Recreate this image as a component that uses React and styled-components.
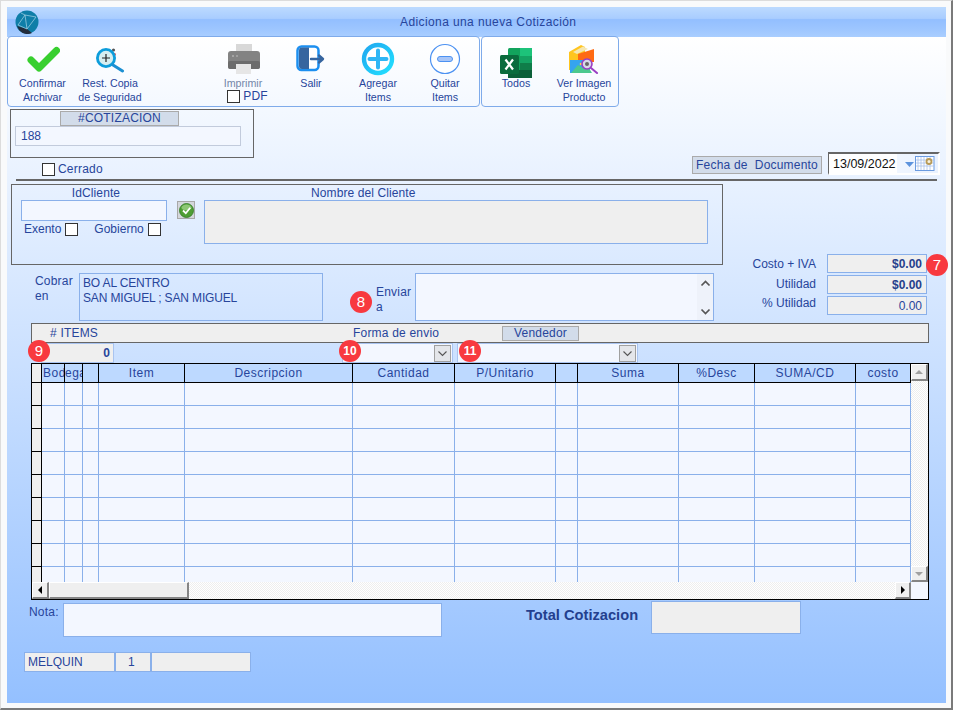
import React from "react";
import styled, { createGlobalStyle } from "styled-components";

const Global = createGlobalStyle`
  html, body { margin: 0; padding: 0; background: #fff; }
  #root { width: 953px; height: 710px; overflow: hidden; }
  * { box-sizing: border-box; }
`;

const INK = "#27459b";
const LINE = "#8ab0ea";
const FIELD = "#f3f7ff";
const GREY = "#efefef";

const Frame = styled.div`
  width: 953px;
  height: 710px;
  padding: 6px 5px 5px 6px;
  background: #f9fafb;
  border-top: 1px solid #dcdcdc;
  border-left: 1px solid #dcdcdc;
  border-right: 2px solid #7a7a7a;
  border-bottom: 2px solid #7a7a7a;
  font-family: "Liberation Sans", Arial, sans-serif;
  font-size: 12px;
  color: ${INK};
`;
const Win = styled.div`
  width: 939px;
  height: 696px;
  background: linear-gradient(180deg, #ffffff 0, #ffffff 30px, #94c0ff 100%);
`;
const TitleBar = styled.div`
  height: 30px;
  display: flex;
  align-items: center;
  padding-left: 8px;
  background: linear-gradient(180deg, #bcdaff 0%, #a9cdff 38%, #93bfff 42%, #9cc5ff 70%, #a9ceff 100%);
`;
const TitleText = styled.div`
  margin-left: 361px;
  font-size: 12px;
  letter-spacing: 0.4px;
  color: ${INK};
`;
const Toolbar = styled.div`
  display: flex;
  margin-top: -1px;
  height: 71px;
  gap: 1px;
`;
const ToolGroup = styled.div`
  display: grid;
  width: ${(p) => p.$w}px;
  grid-template-columns: ${(p) => p.$cols};
  border: 1px solid #7fabea;
  border-radius: 4px;
`;
const Tool = styled.div`
  display: flex;
  flex-direction: column;
  align-items: center;
  text-align: center;
  font-size: 10.67px;
  line-height: 14px;
  color: ${(p) => (p.$muted ? "#7486a8" : INK)};
`;
const ToolIcon = styled.div`
  height: 39px;
  padding-top: ${(p) => p.$pt}px;
  display: flex;
  align-items: flex-start;
  justify-content: center;
  flex: none;
`;
const Spacer = styled.div``;
const PdfRow = styled.div`
  display: flex;
  align-items: center;
  gap: 3px;
  font-size: 12px;
  letter-spacing: 0.2px;
  color: ${INK};
  line-height: 13px;
  margin-left: 9px;
`;
const Check = styled.span`
  display: inline-block;
  flex: none;
  width: 13px;
  height: 13px;
  background: #fff;
  border: 1px solid #333;
`;
const TopRow = styled.div`
  display: flex;
  justify-content: space-between;
  align-items: flex-end;
  padding: 2px 6px 0 3px;
`;
const QuoteCol = styled.div`
  display: flex;
  flex-direction: column;
`;
const QuoteBox = styled.div`
  width: 244px;
  height: 49px;
  border: 1px solid #666;
  padding: 1px 12px 0 4px;
  display: flex;
  flex-direction: column;
  align-items: flex-start;
`;
const HeadLabel = styled.div`
  background: #d2dcea;
  border: 1px solid #aaa;
  color: ${INK};
  text-align: center;
  font-size: 12px;
  line-height: ${(p) => (p.$h || 15) - 2}px;
  letter-spacing: 0.2px;
  width: ${(p) => p.$w}px;
  height: ${(p) => p.$h || 15}px;
  margin-left: ${(p) => p.$ml || 0}px;
  margin-bottom: ${(p) => p.$mb || 0}px;
  flex: none;
`;
const QuoteInput = styled.div`
  width: 226px;
  height: 20px;
  background: ${FIELD};
  border: 1px solid #c2cbdc;
  padding-left: 5px;
  line-height: 18px;
  font-size: 12px;
`;
const CheckLine = styled.label`
  display: flex;
  align-items: center;
  gap: 3px;
  height: 13px;
  margin: 5px 0 0 32px;
  font-size: 12px;
  line-height: 11px;
  letter-spacing: 0.2px;
`;
const DateGroup = styled.div`
  display: flex;
  align-items: flex-end;
  gap: 6px;
  margin-bottom: 1px;
`;
const DateBox = styled.div`
  width: 112px;
  height: 23px;
  display: flex;
  align-items: center;
  background: linear-gradient(90deg, #fff 0, #fff 62%, #f0f6ff 62%, #eaf2ff 100%);
  border-top: 2px solid #666;
  border-left: 1px solid #666;
  border-right: 2px solid #fff;
  border-bottom: 2px solid #fff;
  color: #111;
  font-size: 12.5px;
  padding-left: 4px;
  gap: 9px;
`;
const Rule = styled.div`
  height: 2px;
  background: #666;
  margin: 3px 9px 0 9px;
`;
const MainRow = styled.div`
  display: grid;
  grid-template-columns: 733px 206px;
  margin-top: 3px;
`;
const ClientBox = styled.div`
  margin-left: 4px;
  width: 712px;
  height: 81px;
  border: 1px solid #666;
  padding: 0 0 0 9px;
  display: grid;
  grid-template-columns: 146px 17px 504px;
  column-gap: 10px;
  grid-template-rows: 15px auto;
`;
const ClientHead = styled.div`
  text-align: ${(p) => p.$align || "center"};
  padding-left: ${(p) => p.$pl || 0}px;
  line-height: 17px;
  font-size: 12px;
  letter-spacing: 0.1px;
`;
const ClientCol = styled.div`
  display: flex;
  flex-direction: column;
`;
const FieldBox = styled.div`
  width: ${(p) => (p.$w ? `${p.$w}px` : "auto")};
  height: ${(p) => p.$h}px;
  background: ${(p) => p.$bg || FIELD};
  border: 1px solid ${LINE};
  flex: none;
`;
const VerifyBtn = styled.div`
  width: 18px;
  height: 18px;
  margin-top: 1px;
  background: #d4d7dc;
  border: 1px solid #a8a8a8;
  display: flex;
  align-items: center;
  justify-content: center;
`;
const TaxRow = styled.div`
  display: flex;
  align-items: center;
  margin-top: 1px;
  padding-left: 3px;
`;
const TaxItem = styled.span`
  display: flex;
  align-items: center;
  gap: 4px;
  margin-right: 16px;
`;
const AddressRow = styled.div`
  display: flex;
  margin-top: 8px;
  height: 48px;
`;
const SideLabel = styled.div`
  position: relative;
  line-height: 15px;
  letter-spacing: 0.2px;
  flex: none;
  width: ${(p) => p.$w}px;
  margin-left: ${(p) => p.$ml}px;
  padding-top: ${(p) => p.$pt}px;
`;
const AddressBox = styled.div`
  width: ${(p) => p.$w}px;
  height: 48px;
  border: 1px solid ${LINE};
  background: ${(p) => p.$bg || "transparent"};
  padding: 2px 0 0 3px;
  line-height: 15px;
  font-size: 12px;
  display: flex;
  justify-content: flex-end;
  white-space: pre-line;
`;
const AddressText = styled.div`
  flex: 1;
  letter-spacing: -0.15px;
`;
const TextScroll = styled.div`
  width: 16px;
  background: #eef2fa;
  margin-top: -2px;
  display: flex;
  flex-direction: column;
  justify-content: space-between;
  align-items: center;
  padding: 6px 0 5px;
`;
const StatsCol = styled.div`
  padding-top: 70px;
  display: grid;
  grid-template-columns: 76px 100px;
  column-gap: 11px;
  grid-auto-rows: 19px;
  row-gap: 2px;
  align-content: start;
`;
const StatLabel = styled.div`
  text-align: right;
  line-height: ${(p) => p.$lh}px;
  white-space: nowrap;
`;
const StatValue = styled.div`
  position: relative;
  background: ${GREY};
  border: 1px solid ${LINE};
  text-align: right;
  padding-right: 4px;
  line-height: 18px;
  font-weight: ${(p) => (p.$bold ? 700 : 400)};
  color: ${(p) => (p.$bold ? "#263f8c" : INK)};
`;
const Badge = styled.span`
  position: absolute;
  left: ${(p) => p.$x}px;
  top: ${(p) => p.$y}px;
  width: 22px;
  height: 22px;
  border-radius: 50%;
  background: #f8393f;
  color: #fff;
  font-size: ${(p) => p.$fs || 15}px;
  font-weight: ${(p) => (p.$fs ? 700 : 400)};
  line-height: 22px;
  text-align: center;
  z-index: 3;
`;
const InfoBar = styled.div`
  margin: 2px 0 0 24px;
  width: 898px;
  height: 20px;
  background: ${GREY};
  border: 1px solid #666;
  display: flex;
  align-items: center;
  letter-spacing: 0.2px;
`;
const BarText = styled.span`
  flex: none;
  width: ${(p) => p.$w}px;
  margin-left: ${(p) => p.$ml}px;
`;
const SelectRow = styled.div`
  display: flex;
  margin-left: 34px;
  height: 20px;
`;
const CountBox = styled.div`
  position: relative;
  width: 73px;
  height: 20px;
  background: ${GREY};
  border: 1px solid #a9c4f0;
  text-align: right;
  padding-right: 3px;
  font-weight: 700;
  line-height: 19px;
`;
const SelectBox = styled.div`
  position: relative;
  width: ${(p) => p.$w}px;
  margin-left: ${(p) => p.$ml}px;
  height: 20px;
  background: ${FIELD};
  border: 1px solid #a9c4f0;
  display: flex;
  justify-content: flex-end;
  padding: 1px;
`;
const SelectBtn = styled.div`
  width: 17px;
  height: 17px;
  background: #e4e6ea;
  border: 1px solid #a0a0a0;
  display: flex;
  align-items: center;
  justify-content: center;
`;
const TableWrap = styled.div`
  margin-left: 24px;
  width: 898px;
  height: 237px;
  border: 1px solid #000;
  background: ${FIELD};
`;
const TableTop = styled.div`
  display: flex;
  height: 218px;
`;
const GridArea = styled.div`
  width: 879px;
  height: 218px;
  overflow: hidden;
  display: grid;
  grid-template-columns: 10px 23px 18px 16px 86px 168px 102px 101px 22px 101px 76px 101px 55px;
  grid-template-rows: 19px;
  grid-auto-rows: 23px;
`;
const HeadCell = styled.div`
  background: #bdd9ff;
  border-right: 1px solid #000;
  border-bottom: 1px solid #000;
  text-align: ${(p) => p.$align || "center"};
  padding-left: ${(p) => p.$pl || 0}px;
  line-height: 18px;
  font-size: 12px;
  letter-spacing: 0.5px;
  white-space: nowrap;
  overflow: hidden;
`;
const CornerCell = styled.div`
  background: ${GREY};
  border-right: 1px solid #000;
  border-bottom: 1px solid #000;
`;
const RowHead = styled(CornerCell)``;
const BodyCell = styled.div`
  background: ${FIELD};
  border-right: 1px solid ${LINE};
  border-bottom: 1px solid ${LINE};
`;
const Dither = styled.div`
  background-color: #f8f8f8;
  background-image: repeating-conic-gradient(#eeeeee 0 25%, #ffffff 0 50%);
  background-size: 2px 2px;
`;
const VScroll = styled(Dither)`
  width: 17px;
  display: flex;
  flex-direction: column;
  justify-content: space-between;
`;
const HScroll = styled.div`
  display: flex;
  height: 17px;
`;
const HTrack = styled(Dither)`
  flex: 1;
`;
const ScrollBtn = styled.div`
  width: ${(p) => p.$w || 17}px;
  height: ${(p) => p.$h || 17}px;
  flex: none;
  background: ${GREY};
  border-top: 1px solid #fff;
  border-left: 1px solid #fff;
  border-right: 2px solid #858585;
  border-bottom: 2px solid #858585;
  display: flex;
  align-items: center;
  justify-content: center;
`;
const Corner = styled.div`
  width: 17px;
  flex: none;
`;
const Arrow = styled.span`
  width: 0;
  height: 0;
  border-style: solid;
  ${(p) =>
    p.$dir === "left"
      ? "border-width: 4px 4px 4px 0; border-color: transparent #000 transparent transparent;"
      : p.$dir === "right"
      ? "border-width: 4px 0 4px 4px; border-color: transparent transparent transparent #000;"
      : p.$dir === "up"
      ? "border-width: 0 4px 4px 4px; border-color: transparent transparent #a0a0a0 transparent;"
      : "border-width: 4px 4px 0 4px; border-color: #a0a0a0 transparent transparent transparent;"}
`;
const FootRow = styled.div`
  display: flex;
  align-items: flex-start;
  height: 49px;
`;
const NoteLabel = styled.div`
  margin: 5px 0 0 22px;
  width: 34px;
  letter-spacing: 0.2px;
`;
const NoteBox = styled(FieldBox)`
  margin-top: 3px;
`;
const TotalLabel = styled.div`
  margin: 7px 0 0 84px;
  width: 125px;
  font-size: 14.67px;
  font-weight: 700;
  white-space: nowrap;
  color: #233f8e;
  line-height: 17px;
`;
const TotalBox = styled(FieldBox)`
  margin-top: 1px;
`;
const StatusRow = styled.div`
  display: flex;
  margin: 3px 0 0 17px;
`;
const StatusCell = styled.div`
  width: ${(p) => p.$w}px;
  height: 20px;
  background: ${GREY};
  border: 1px solid ${LINE};
  padding-left: ${(p) => p.$pl || 0}px;
  line-height: 18px;
`;

const Globe = () => (
  <svg width="24" height="24" viewBox="0 0 24 24">
    <circle cx="12" cy="12" r="11.5" fill="#0f7ea8" />
    <path d="M2 16 L12 19 L17 23 A11.5 11.5 0 0 1 4 20 Z" fill="#222c3c" />
    <path d="M3 15 L10 5 L21 7 M10 5 L12 19 L21 7 M3 15 L12 19 M6 3 L10 5" fill="none" stroke="#a8d4e6" strokeWidth="0.7" />
  </svg>
);
const CheckIcon = () => (
  <svg width="34" height="28" viewBox="-1 0 34 28">
    <polyline points="4,15 12,23 29.5,5.5" fill="none" stroke="#38cf2f" strokeWidth="7" strokeLinecap="round" strokeLinejoin="round" />
  </svg>
);
const RestoreIcon = () => (
  <svg width="32" height="28" viewBox="0 0 32 28">
    <circle cx="19.5" cy="5" r="1.6" fill="#555" />
    <circle cx="20.5" cy="9.5" r="1.4" fill="#ef5350" />
    <circle cx="12" cy="13" r="8.6" fill="#d6eef0" stroke="#0d9ddb" strokeWidth="2.8" />
    <path d="M12 9 V17 M8 13 H16" stroke="#222" strokeWidth="1.2" />
    <path d="M19 20 L28.5 26" stroke="#1b8fd2" strokeWidth="3" strokeLinecap="round" />
  </svg>
);
const PrinterIcon = () => (
  <svg width="34" height="32" viewBox="-1 0 34 32">
    <rect x="9" y="1" width="16" height="10" fill="#d8d8d8" />
    <rect x="1" y="8" width="32" height="18" rx="3" fill="#838383" />
    <rect x="1" y="18" width="32" height="8" rx="2" fill="#6c6c6c" />
    <circle cx="6" cy="13" r="1" fill="#b0b0b0" />
    <circle cx="10" cy="13" r="1" fill="#a8a8a8" />
    <rect x="9" y="21" width="15" height="10" fill="#e6e6e6" />
  </svg>
);
const ExitIcon = () => (
  <svg width="30" height="28" viewBox="0 0 30 28">
    <rect x="1.5" y="1.5" width="21" height="23.5" rx="4" fill="#fff" stroke="#1c8ff0" strokeWidth="2.5" />
    <path d="M3 5.5 a3 3 0 0 1 3 -3 H13 V24 H6 a3 3 0 0 1 -3 -3 Z" fill="#36659f" />
    <path d="M15 14 H26 M23 10.5 L27 14 L23 17.5" fill="none" stroke="#36659f" strokeWidth="2.4" strokeLinecap="round" strokeLinejoin="round" />
  </svg>
);
const PlusIcon = () => (
  <svg width="34" height="34" viewBox="0 0 34 34">
    <defs>
      <linearGradient id="plusg" x1="0" y1="0" x2="1" y2="1">
        <stop offset="0" stopColor="#20a8f0" />
        <stop offset="1" stopColor="#22e0ff" />
      </linearGradient>
    </defs>
    <circle cx="17" cy="17" r="14" fill="#fff" stroke="url(#plusg)" strokeWidth="4.4" />
    <path d="M17 8.5 V25.5 M8.5 17 H25.5" stroke="#2fb6f5" strokeWidth="4" strokeLinecap="round" />
  </svg>
);
const MinusIcon = () => (
  <svg width="32" height="32" viewBox="0 0 32 32">
    <circle cx="16" cy="16" r="14.5" fill="#fff" stroke="#4d92f2" strokeWidth="1.2" />
    <rect x="8.5" y="13.5" width="15" height="5" rx="2.5" fill="#a8c6f8" stroke="#4d92f2" strokeWidth="1" />
  </svg>
);
const ExcelIcon = () => (
  <svg width="32" height="30" viewBox="0 0 32 30">
    <rect x="8" y="0" width="24" height="30" rx="1.5" fill="#12a35c" />
    <rect x="20" y="0" width="12" height="8" fill="#1dc37a" />
    <rect x="20" y="8" width="12" height="7" fill="#14a363" />
    <rect x="20" y="15" width="12" height="7" fill="#0f7d49" />
    <rect x="8" y="22" width="24" height="8" fill="#0b5f38" />
    <rect x="0" y="7" width="19" height="19" rx="1.5" fill="#0a6b3d" />
    <path d="M5.5 11.5 L13 21.5 M13 11.5 L5.5 21.5" stroke="#fff" strokeWidth="2.2" />
  </svg>
);
const ImageIcon = () => (
  <svg width="32" height="30" viewBox="0 0 32 30">
    <path d="M1 8 L13 1 L17 3 V17 H3 V26 H1 Z" fill="#ffc51f" />
    <path d="M5 8 L15 2.5 L20 5 L9 10 Z" fill="#f5e6b0" />
    <path d="M10 10 L26 5 V18 H10 Z" fill="#ff6a13" />
    <rect x="2" y="16" width="20" height="13" fill="#35a4ef" />
    <path d="M3 29 L10 21 L15 24 L19 21 L24 29 Z" fill="#4cc88e" />
    <circle cx="13" cy="20" r="1.3" fill="#ffd24a" />
    <circle cx="19" cy="20" r="5" fill="#d8d8e8" stroke="#9a3fc4" strokeWidth="1.6" />
    <circle cx="19" cy="20" r="2" fill="#666" />
    <path d="M23 24 L29 29" stroke="#9a3fc4" strokeWidth="2" strokeLinecap="round" />
  </svg>
);
const VerifyIcon = () => (
  <svg width="15" height="15" viewBox="0 0 15 15">
    <circle cx="7.5" cy="7.5" r="7" fill="#4f9e35" stroke="#2f7a22" strokeWidth="0.8" />
    <ellipse cx="7.5" cy="4.5" rx="5" ry="3" fill="#a8d990" opacity="0.7" />
    <path d="M4 7.5 L6.8 10.2 L11.2 4.8" fill="none" stroke="#fff" strokeWidth="1.8" />
  </svg>
);
const CalendarIcon = () => (
  <svg width="30" height="15" viewBox="0 0 30 15">
    <path d="M0 6 H9 L4.5 11 Z" fill="#5d93dd" />
    <rect x="10.5" y="0.5" width="18.5" height="14" fill="#fff" stroke="#6b9be0" />
    <path d="M13 1 V14 M16 1 V14 M19 1 V14 M22 1 V14 M25 1 V14 M11 4 H29 M11 7 H29 M11 10 H29" stroke="#a8c0ea" strokeWidth="0.8" />
    <circle cx="24" cy="5.5" r="2.5" fill="#f7f0dc" stroke="#b89a55" strokeWidth="1.8" />
  </svg>
);
const Chevron = ({ up, bold, color = "#555" }) => (
  <svg width="11" height="7" viewBox="0 0 11 7">
    <path d={up ? "M1.5 5.5 L5.5 1.5 L9.5 5.5" : "M1.5 1.5 L5.5 5.5 L9.5 1.5"} fill="none" stroke={color} strokeWidth={bold ? 1.7 : 1.1} />
  </svg>
);

const columns = [
  { t: "Bod", align: "left", pl: 1 },
  { t: "ega", align: "left" },
  { t: "" },
  { t: "Item" },
  { t: "Descripcion" },
  { t: "Cantidad" },
  { t: "P/Unitario" },
  { t: "" },
  { t: "Suma" },
  { t: "%Desc" },
  { t: "SUMA/CD" },
  { t: "costo" },
];
const rows = Array.from({ length: 10 }, (_, i) => i);

export default function App() {
  return (
    <>
      <Global />
      <Frame>
        <Win>
          <TitleBar>
            <Globe />
            <TitleText>Adiciona una nueva Cotización</TitleText>
          </TitleBar>
          <Toolbar>
            <ToolGroup $w={473} $cols="69px 66px 66px 68px 68px 66px 68px">
              <Tool>
                <ToolIcon $pt={8}><CheckIcon /></ToolIcon>
                Confirmar<br />Archivar
              </Tool>
              <Tool>
                <ToolIcon $pt={8}><RestoreIcon /></ToolIcon>
                Rest. Copia<br />de Seguridad
              </Tool>
              <Spacer />
              <Tool $muted>
                <ToolIcon $pt={6}><PrinterIcon /></ToolIcon>
                Imprimir
                <PdfRow><Check />PDF</PdfRow>
              </Tool>
              <Tool>
                <ToolIcon $pt={8}><ExitIcon /></ToolIcon>
                Salir
              </Tool>
              <Tool>
                <ToolIcon $pt={5}><PlusIcon /></ToolIcon>
                Agregar<br />Items
              </Tool>
              <Tool>
                <ToolIcon $pt={6}><MinusIcon /></ToolIcon>
                Quitar<br />Items
              </Tool>
            </ToolGroup>
            <ToolGroup $w={138} $cols="68px 68px">
              <Tool>
                <ToolIcon $pt={11}><ExcelIcon /></ToolIcon>
                Todos
              </Tool>
              <Tool>
                <ToolIcon $pt={7}><ImageIcon /></ToolIcon>
                Ver Imagen<br />Producto
              </Tool>
            </ToolGroup>
          </Toolbar>
          <TopRow>
            <QuoteCol>
              <QuoteBox>
                <HeadLabel $w={119} $ml={45}>#COTIZACION</HeadLabel>
                <QuoteInput>188</QuoteInput>
              </QuoteBox>
              <CheckLine><Check />Cerrado</CheckLine>
            </QuoteCol>
            <DateGroup>
              <HeadLabel $w={130} $h={18} $mb={1}>Fecha de&nbsp; Documento</HeadLabel>
              <DateBox>13/09/2022<CalendarIcon /></DateBox>
            </DateGroup>
          </TopRow>
          <Rule />
          <MainRow>
            <div>
              <ClientBox>
                <ClientHead $pl={4}>IdCliente</ClientHead>
                <span />
                <ClientHead $align="left" $pl={107}>Nombre del Cliente</ClientHead>
                <ClientCol>
                  <FieldBox $w={146} $h={21} />
                  <TaxRow>
                    <TaxItem>Exento <Check /></TaxItem>
                    <TaxItem>Gobierno <Check /></TaxItem>
                  </TaxRow>
                </ClientCol>
                <VerifyBtn><VerifyIcon /></VerifyBtn>
                <FieldBox $h={44} $bg={GREY} />
              </ClientBox>
              <AddressRow>
                <SideLabel $w={44} $ml={28} $pt={1}>Cobrar<br />en</SideLabel>
                <AddressBox $w={244}>
                  <AddressText>{"BO AL CENTRO\nSAN MIGUEL ; SAN MIGUEL"}</AddressText>
                </AddressBox>
                <SideLabel $w={39} $ml={53} $pt={12}>
                  <Badge $x={-26} $y={18}>8</Badge>
                  Enviar<br />a
                </SideLabel>
                <AddressBox $w={299} $bg={FIELD}>
                  <TextScroll>
                    <Chevron up bold />
                    <Chevron bold />
                  </TextScroll>
                </AddressBox>
              </AddressRow>
            </div>
            <StatsCol>
              <StatLabel $lh={21}>Costo + IVA</StatLabel>
              <StatValue $bold>$0.00<Badge $x={98} $y={-1}>7</Badge></StatValue>
              <StatLabel $lh={19}>Utilidad</StatLabel>
              <StatValue $bold>$0.00</StatValue>
              <StatLabel $lh={15}>% Utilidad</StatLabel>
              <StatValue>0.00</StatValue>
            </StatsCol>
          </MainRow>
          <InfoBar>
            <BarText $w={303} $ml={18}># ITEMS</BarText>
            <BarText $w={149} $ml={0}>Forma de envio</BarText>
            <HeadLabel $w={77}>Vendedor</HeadLabel>
          </InfoBar>
          <SelectRow>
            <CountBox>
              <Badge $x={-14} $y={-4}>9</Badge>
              0
            </CountBox>
            <SelectBox $w={111} $ml={228}>
              <Badge $x={-4} $y={-4} $fs={12}>10</Badge>
              <SelectBtn><Chevron /></SelectBtn>
            </SelectBox>
            <SelectBox $w={181} $ml={4}>
              <Badge $x={1} $y={-4} $fs={12}>11</Badge>
              <SelectBtn><Chevron /></SelectBtn>
            </SelectBox>
          </SelectRow>
          <TableWrap>
            <TableTop>
              <GridArea>
                <CornerCell />
                {columns.map((c, i) => (
                  <HeadCell key={i} $align={c.align} $pl={c.pl}>{c.t}</HeadCell>
                ))}
                {rows.map((r) => (
                  <React.Fragment key={r}>
                    <RowHead />
                    {columns.map((_, i) => <BodyCell key={i} />)}
                  </React.Fragment>
                ))}
              </GridArea>
              <VScroll>
                <ScrollBtn><Arrow $dir="up" /></ScrollBtn>
                <ScrollBtn $h={16}><Arrow $dir="down" /></ScrollBtn>
              </VScroll>
            </TableTop>
            <HScroll>
              <ScrollBtn $w={17}><Arrow $dir="left" /></ScrollBtn>
              <ScrollBtn $w={140} />
              <HTrack />
              <ScrollBtn $w={16}><Arrow $dir="right" /></ScrollBtn>
              <Corner />
            </HScroll>
          </TableWrap>
          <FootRow>
            <NoteLabel>Nota:</NoteLabel>
            <NoteBox $w={379} $h={34} />
            <TotalLabel>Total Cotizacion</TotalLabel>
            <TotalBox $w={150} $h={33} $bg={GREY} />
          </FootRow>
          <StatusRow>
            <StatusCell $w={91} $pl={3}>MELQUIN</StatusCell>
            <StatusCell $w={36} $pl={12}>1</StatusCell>
            <StatusCell $w={100} />
          </StatusRow>
        </Win>
      </Frame>
    </>
  );
}
